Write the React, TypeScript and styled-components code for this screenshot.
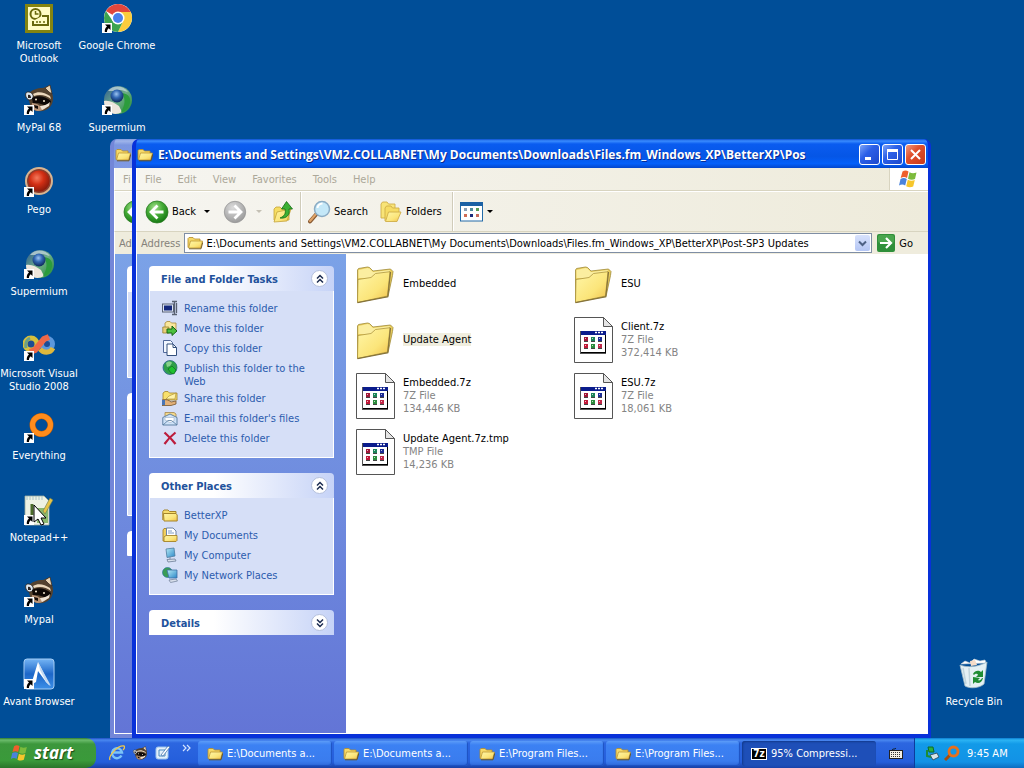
import React from 'react';
import styled, { createGlobalStyle, css } from 'styled-components';

const UI_FONT = '"DejaVu Sans Condensed", "DejaVu Sans", "Noto Sans", sans-serif';
const TITLE_FONT = '"Open Sans", "Noto Sans", sans-serif';

const GlobalStyle = createGlobalStyle`
  *, *::before, *::after { box-sizing: border-box; }
  body {
    margin: 0;
    overflow: hidden;
    font-family: ${UI_FONT};
    font-size: 11px;
    line-height: 13px;
  }
  button, input { font: inherit; color: inherit; }
  button { border: 0; padding: 0; background: none; }
  ul { list-style: none; margin: 0; padding: 0; }
  h1, h2, p { margin: 0; }
  svg { display: block; flex: none; }
`;

/* ---------- drawings ---------- */

const SharedDefs = styled.svg`
  position: absolute;
`;

const Gradients = () => (
  <SharedDefs width="0" height="0" aria-hidden="true">
    <defs>
      <linearGradient id="folderFront" x1="0" y1="0" x2="1" y2="1">
        <stop offset="0" stopColor="#fff6a8" />
        <stop offset="0.6" stopColor="#fbe57a" />
        <stop offset="1" stopColor="#f0bf4a" />
      </linearGradient>
      <radialGradient id="greenBall" cx="0.4" cy="0.3" r="0.7">
        <stop offset="0" stopColor="#a4e08c" />
        <stop offset="0.5" stopColor="#46ac38" />
        <stop offset="1" stopColor="#177a14" />
      </radialGradient>
      <radialGradient id="grayBall" cx="0.4" cy="0.3" r="0.7">
        <stop offset="0" stopColor="#dcdcdc" />
        <stop offset="1" stopColor="#9c9c9c" />
      </radialGradient>
      <radialGradient id="redBall" cx="0.4" cy="0.35" r="0.65">
        <stop offset="0" stopColor="#f47a5c" />
        <stop offset="0.5" stopColor="#d32f14" />
        <stop offset="1" stopColor="#8c1c0c" />
      </radialGradient>
      <radialGradient id="blueBall" cx="0.45" cy="0.35" r="0.65">
        <stop offset="0" stopColor="#9cc4f0" />
        <stop offset="0.45" stopColor="#3268b4" />
        <stop offset="1" stopColor="#0c2658" />
      </radialGradient>
      <linearGradient id="globe" x1="0" y1="0" x2="1" y2="1">
        <stop offset="0" stopColor="#2c5890" />
        <stop offset="0.5" stopColor="#6fae8a" />
        <stop offset="1" stopColor="#1c8a2c" />
      </linearGradient>
      <linearGradient id="screen" x1="0" y1="0" x2="1" y2="1">
        <stop offset="0" stopColor="#b8ecf6" />
        <stop offset="1" stopColor="#2a86c8" />
      </linearGradient>
      <linearGradient id="avant" x1="0" y1="0" x2="0" y2="1">
        <stop offset="0" stopColor="#74b4f4" />
        <stop offset="0.5" stopColor="#1c66c8" />
        <stop offset="1" stopColor="#3c90e8" />
      </linearGradient>
    </defs>
  </SharedDefs>
);

const ShortcutArrow = () => (
  <g>
    <rect x="1" y="21" width="10" height="10" fill="#fff" />
    <path d="M4 22.500h5.500V28L7.700 26.300C6.200 27.500 6 28.500 6 30H3.800c-.2-2.400.6-4.200 2.200-5.500z" fill="#000" />
  </g>
);

const SmallFolder = () => (
  <svg width="16" height="16" viewBox="0 0 16 16">
    <path d="M1 12.500V3.500L2 2.500h4l1.500 1.500H13v3" fill="#f6d968" stroke="#b48c28" strokeWidth=".8" />
    <path d="M1.500 13 3.500 6h12l-1.800 7z" fill="url(#folderFront)" stroke="#b48c28" strokeWidth=".7" />
    <path d="M2 13.800h12l1.800-6.500" fill="none" stroke="#6e5214" strokeWidth=".9" />
  </svg>
);

const BigFolder = () => (
  <svg width="48" height="48" viewBox="0 0 48 48">
    <path d="M6.500 43V11l1-1.500L16.500 8l2 .5 3.500 3.500 17.500-2 2.500 2.500-.5 4-4.500 21z" fill="#e9cd5c" stroke="#a08a38" strokeWidth=".8" />
    <path d="M7.500 19V11l9-2 2 .5 3.500 3.500 17-2-2 4-12 2-6 2.500z" fill="#fbeea0" />
    <path d="M7 20.500 20 18.500l4.500-4L39 12.700 36.500 37 6.500 43.500z" fill="url(#folderFront)" stroke="#a48a34" strokeWidth=".7" />
    <path d="M6.500 43.700 36.800 37.800 39.500 13" fill="none" stroke="#85733c" strokeWidth="1.200" />
  </svg>
);

const Dot = ({ x, y, c }: { x: number; y: number; c: string }) => (
  <g>
    <rect x={x} y={y} width="4" height="4" fill={c} />
    <rect x={x + 1} y={y + 1} width="1" height="1" fill="#fff" opacity=".7" />
    <rect x={x} y={y + 4} width="4" height="1" fill="#444" />
  </g>
);

const BigDocument = () => (
  <svg width="48" height="48" viewBox="0 0 48 48">
    <path d="M5.500 2.500h29l9 9v36h-38z" fill="#fff" stroke="#555" />
    <path d="M34.500 2.500v9h9z" fill="#e4e4e4" stroke="#555" />
    <rect x="11" y="16" width="26" height="23" fill="#555" />
    <rect x="12" y="16" width="25" height="22" fill="#000" />
    <rect x="12" y="19" width="24" height="18" fill="#fff" />
    <rect x="12" y="16" width="25" height="4" fill="#0a1c8c" />
    <path d="M26 17.500h2m1 0h2m1 0h2" stroke="#fff" strokeWidth="1.500" />
    <Dot x={15} y={22} c="#a01838" />
    <Dot x={22} y={22} c="#1c8458" />
    <Dot x={29} y={22} c="#1c2c94" />
    <Dot x={15} y={29} c="#c01838" />
    <Dot x={22} y={29} c="#2c8c3c" />
    <Dot x={29} y={29} c="#c02848" />
  </svg>
);

const WindowsFlag = ({ size = 22 }: { size?: number }) => (
  <svg width={size} height={size} viewBox="0 0 22 22">
    <path d="M4.500 3.500c2-1.200 4-1.200 6 0L9 10c-2-1.200-4-1.200-6.300 0z" fill="#ee5f2c" />
    <path d="M11.500 4.200c2.200 1.300 4.500 1.300 7 .2L17 11c-2.300 1-4.500 1-7-.3z" fill="#7cbb3c" />
    <path d="M2.500 11c2.200-1.200 4.200-1.200 6.300 0l-1.600 6.500c-2-1.200-4-1.200-6.200 0z" fill="#4a83dc" />
    <path d="M9.800 11.800c2.400 1.300 4.600 1.300 7 .2L15.200 18.500c-2.400 1.100-4.700 1-7-.2z" fill="#f6c62c" />
  </svg>
);

const BackBall = () => (
  <svg width="24" height="24" viewBox="0 0 24 24">
    <circle cx="12" cy="12" r="11" fill="url(#greenBall)" stroke="#2c7c24" strokeWidth=".8" />
    <path d="M12.500 5.500 6 12l6.500 6.500M6.500 12h12" fill="none" stroke="#fff" strokeWidth="2.800" />
  </svg>
);

const ForwardBall = () => (
  <svg width="24" height="24" viewBox="0 0 24 24">
    <circle cx="12" cy="12" r="10.700" fill="url(#grayBall)" stroke="#959595" strokeWidth=".8" />
    <path d="m11.500 5.500 6.500 6.500-6.500 6.500M17.500 12h-12" fill="none" stroke="#fff" strokeWidth="2.800" />
  </svg>
);

const UpIcon = () => (
  <svg width="24" height="24" viewBox="0 0 24 24">
    <path d="M3 20V9l2-2h4l2 2h4l3-1v12z" fill="#f6dd62" stroke="#c4a33a" strokeWidth=".8" />
    <path d="m3 22 3-10 14-3-4 12z" fill="url(#folderFront)" stroke="#c4a33a" strokeWidth=".8" />
    <path d="M9 18c5-2 6-5 5-9h-3.500l5-7.500L21.500 9H18c1.500 6-3 10-9 9z" fill="#3cb034" stroke="#146c14" strokeWidth=".8" />
  </svg>
);

const SearchIcon = () => (
  <svg width="24" height="24" viewBox="0 0 24 24">
    <path d="m3 21.500 6.500-7.500" stroke="#8a5c34" strokeWidth="4" strokeLinecap="round" />
    <path d="m3 21 6-7" stroke="#e0a468" strokeWidth="2" strokeLinecap="round" />
    <circle cx="15" cy="9" r="7.500" fill="#c4e8f8" stroke="#8bacc4" strokeWidth="1.500" />
    <path d="M10.500 8a5 5 0 0 1 5-4.500" fill="none" stroke="#fff" strokeWidth="2" />
  </svg>
);

const FoldersIcon = () => (
  <svg width="24" height="24" viewBox="0 0 24 24">
    <path d="M2 18V4l1.500-2H8l1.500 2H16v14z" fill="#f8e478" stroke="#cfae48" strokeWidth=".9" />
    <path d="M6 21V8l1.500-2H12l1.500 2H20v5" fill="#f6dc64" stroke="#cfae48" strokeWidth=".9" />
    <path d="m6.500 21.500 3-9.500H22l-4 9.500z" fill="url(#folderFront)" stroke="#cfae48" strokeWidth=".9" />
  </svg>
);

const ViewsIcon = () => (
  <svg width="24" height="20" viewBox="0 0 24 20">
    <rect x=".5" y=".5" width="22" height="18.500" fill="#fff" stroke="#236ba8" />
    <rect x="0" y="0" width="23" height="4" fill="#1b61a4" />
    {[4, 10, 16].map((x, i) => (
      <g key={x}>
        <rect x={x} y="6" width="3" height="3" fill={['#8aa0b4', '#4c8c9c', '#5a9c54'][i]} />
        <rect x={x} y="12" width="3" height="3" fill={['#d06c54', '#1a2c7c', '#c86c5c'][i]} />
      </g>
    ))}
  </svg>
);

const GoIcon = () => (
  <svg width="18" height="18" viewBox="0 0 18 18">
    <rect width="18" height="18" rx="2" fill="#2f8f3a" />
    <rect x="1" y="1" width="16" height="8" rx="2" fill="#5cb45c" opacity=".6" />
    <path d="M3 9h10M9 4l5 5-5 5" fill="none" stroke="#fff" strokeWidth="2.200" />
  </svg>
);

const Chevrons = ({ down }: { down?: boolean }) => (
  <svg width="10" height="10" viewBox="0 0 10 10">
    <path
      d={down ? 'm2 1.500 3 3 3-3M2 5.500l3 3 3-3' : 'm2 4.500 3-3 3 3M2 8.500l3-3 3 3'}
      fill="none"
      stroke="#1c2c50"
      strokeWidth="1.500"
    />
  </svg>
);

/* sixteen-pixel drawings of the task pane */
const paneArt = {
  rename: (
    <>
      <rect x=".5" y="4" width="11" height="8" fill="#dfe6f4" stroke="#5b6478" />
      <rect x="2" y="5.500" width="8" height="5" fill="#14287c" />
      <path d="M10 1.500h5M12.500 1.500v13M10 14.500h5M14.500 3v10" stroke="#5a6272" strokeWidth="1.300" />
    </>
  ),
  move: (
    <>
      <path d="M3 9V3l2-1.500h3L9.500 3H14v8z" fill="#f9e79c" stroke="#a98c38" strokeWidth=".8" />
      <path d="M.8 13V7h6v6z" fill="#e9d07a" stroke="#99802c" strokeWidth=".8" />
      <path d="M5 9h5V6l5 5-5 4.500V13H5z" fill="#4cc03c" stroke="#176414" />
    </>
  ),
  copy: (
    <>
      <path d="M1.500.500h7l2 2v10h-9z" fill="#f2f7ff" stroke="#51699a" />
      <path d="M5 4h6l3.500 3.500v8H5z" fill="#fff" stroke="#34507c" />
      <path d="M11 4v3.500h3.500" fill="none" stroke="#34507c" />
    </>
  ),
  publish: (
    <>
      <circle cx="8" cy="7.500" r="7" fill="#3f86b4" stroke="#1c5c68" strokeWidth=".7" />
      <path d="M2 5c3-5 9-5 12-1 2 4 0 8-4 10C4 15 1 10 2 5z" fill="#2f9f48" />
      <path d="M4 3c2-2 5-2 6 0L8 6 5 7z" fill="#87d08c" />
      <path d="m6 9 4-3 4 4-2 4-3-1z" fill="#1fc030" stroke="#0b6018" strokeWidth=".6" />
    </>
  ),
  share: (
    <>
      <path d="M1 10V3l2-1.500h3L7.500 3H15v7z" fill="#f8e06c" stroke="#a3842c" strokeWidth=".8" />
      <path d="M4 9 7 6l7-3-1 6z" fill="#fff3a8" stroke="#a3842c" strokeWidth=".6" />
      <path d="M0 10c4-1 7 0 9 2l5-1v3l-5 1.500H0z" fill="#e2b078" stroke="#74542c" strokeWidth=".8" />
      <path d="M0 10h3v5H0z" fill="#4874b4" />
    </>
  ),
  mail: (
    <>
      <path d="M3 6V2.500h9l2 1.500v5" fill="#f4d98c" stroke="#a4864c" strokeWidth=".8" />
      <path d="M.800 7.500 8 4l7 3.500V15H.8z" fill="#cfe2f8" stroke="#54789c" strokeWidth=".9" />
      <path d="M3 7.500h9V11L8 12.500 3 10z" fill="#fff" stroke="#8aa0bc" strokeWidth=".5" />
      <path d="m1 15 5-4.500h3.500L15 15" fill="none" stroke="#54789c" strokeWidth=".8" />
    </>
  ),
  remove: <path d="M2.500 2.500c3 3 7 6 11 11.500M13.500 2.500C9 6 6 9 2.500 14" fill="none" stroke="#bc1c3c" strokeWidth="2.200" />,
  folder: (
    <>
      <path d="M.8 13V4.500L2 3h4l1.500 1.500H14v2" fill="#f6dc6c" stroke="#a5842a" />
      <path d="M1.500 6.500H14l1.200 1.500v6H2z" fill="url(#folderFront)" stroke="#a5842a" />
    </>
  ),
  documents: (
    <>
      <path d="M1 14V3l1-1.500h3V10h9v4z" fill="#f0cf60" stroke="#a5842a" strokeWidth=".9" />
      <path d="M4.500 1h6.500l3 3v7H4.500z" fill="#fff" stroke="#6c83a4" />
      <path d="M6 4h4M6 6h6" stroke="#7f9cc4" />
      <path d="M2 14.500V10l2-1.500h11v5l-1 1z" fill="url(#folderFront)" stroke="#a5842a" strokeWidth=".9" />
    </>
  ),
  computer: (
    <>
      <path d="m4 2 8-1 1 8-8 1.500z" fill="url(#screen)" stroke="#4c7ca0" strokeWidth=".8" />
      <path d="M8 10v2M5 12.500l8-.5 1 2-8 1z" fill="#d9e0ec" stroke="#7888a0" strokeWidth=".9" />
    </>
  ),
  network: (
    <>
      <circle cx="5.500" cy="5.500" r="5" fill="#3a9c54" stroke="#226c9c" strokeWidth=".6" />
      <path d="M5 3h10v8H7z" fill="url(#screen)" stroke="#3c6ca4" strokeWidth=".8" />
      <path d="m7 13 7-1 1.500 2-7 1.500z" fill="#d9e0ec" stroke="#7888a0" strokeWidth=".8" />
    </>
  ),
};

type PaneArt = keyof typeof paneArt;

const PaneIcon = ({ name }: { name: PaneArt }) => (
  <svg width="16" height="16" viewBox="0 0 16 16">
    {paneArt[name]}
  </svg>
);

const Raccoon = () => (
  <g>
    <path d="M6 9c3-3 8-5 14-5l7-3 2 8c2 5 1 11-2 14-4 4-9 5-13 4-5-1-9-6-8-18z" fill="#54422f" />
    <path d="m22 4 5-3 2 9-3-2z" fill="#ead4b4" stroke="#2c2018" strokeWidth=".7" />
    <path d="M3 9c1-2 6-1 7 2s-1 5-4 5c-3-1-4-5-3-7z" fill="#dfe8f0" stroke="#2c241c" strokeWidth=".9" />
    <path d="M5 11c2-1 3 1 3 3L5 14z" fill="#2c2420" />
    <path d="M10 10c5-3 11-2 17 2l1 3c-5-4-11-5-17-3z" fill="#ecd8bc" />
    <path d="M9 14c6-3 13-2 19 3-1 4-4 5-7 4l-6-2-5 1z" fill="#0e0806" />
    <path d="M9 19c3 0 6 1 8 3l8-1c-2 4-6 6-11 6-4-1-6-4-5-8z" fill="#b89478" />
    <path d="M17 22c4 0 8-2 10-4l-1 4-7 4z" fill="#f0e4d4" />
    <path d="m11 21 4 1v3l-3-1z" fill="#140c08" />
    <circle cx="13" cy="15.500" r="1" fill="#f6e8d0" />
    <circle cx="21" cy="17" r="1" fill="#f6e8d0" />
  </g>
);

const GlobeArt = () => (
  <g>
    <circle cx="17" cy="16" r="14" fill="url(#globe)" />
    <path d="M7 7c5-6 15-6 20 1l-7-2-7 1z" fill="#c4d8dc" opacity=".75" />
    <path d="M3 17c6-1 10 2 15 5l3 6c-8 5-18 0-18-11z" fill="#eee6dc" />
    <path d="M21 9c7 1 9 5 8 10-2 6-5 9-9 9 4-7 5-12 1-19z" fill="#2c9c3c" />
    <circle cx="16" cy="12" r="6.500" fill="url(#blueBall)" />
  </g>
);

const desktopArt = {
  outlook: (
    <>
      <rect x="2" y="2" width="28" height="29" fill="#848410" />
      <rect x="5" y="5" width="22" height="23" fill="#fffcc4" />
      <circle cx="12.500" cy="12" r="5" fill="#fffcc4" stroke="#68680c" strokeWidth="2" />
      <path d="M12.500 9v3h3" fill="none" stroke="#68680c" strokeWidth="1.500" />
      <path d="M19 14h6v9H10v-4" fill="#fffcc4" stroke="#68680c" strokeWidth="2" />
      <path d="M13 20h2m1 0h2m2 0h2" stroke="#68680c" strokeWidth="1.500" />
    </>
  ),
  raccoon: (
    <>
      <Raccoon />
      <ShortcutArrow />
    </>
  ),
  pego: (
    <>
      <circle cx="16" cy="15" r="14" fill="#d8b490" />
      <circle cx="16" cy="15" r="12" fill="#8c3c2c" />
      <circle cx="16" cy="15" r="10.500" fill="url(#redBall)" />
      <ShortcutArrow />
    </>
  ),
  globe: (
    <>
      <GlobeArt />
      <ShortcutArrow />
    </>
  ),
  visual: (
    <>
      <circle cx="8" cy="14" r="6" fill="#1c4c94" stroke="#d8c03c" strokeWidth="5" />
      <circle cx="24" cy="14" r="5.500" fill="#1c4c94" stroke="#5c98dc" strokeWidth="5" />
      <path d="M17 19c3 4 10 5 13-1" fill="none" stroke="#e0b83c" strokeWidth="5" />
      <path d="M3 18c-1-5 0-8 4-10" fill="none" stroke="#6ca088" strokeWidth="3" />
      <path d="m7 22 5-2 9-11 5-2" fill="none" stroke="#ee6848" strokeWidth="6" />
      <ShortcutArrow />
    </>
  ),
  everything: (
    <>
      <circle cx="18.500" cy="13" r="9" fill="none" stroke="#b85c0c" strokeWidth="6" />
      <circle cx="18.500" cy="13" r="9" fill="none" stroke="#ff8c1c" strokeWidth="5" />
      <ShortcutArrow />
    </>
  ),
  notepad: (
    <>
      <path d="M2 2h19l5 5v24H2z" fill="#eef2e4" stroke="#9caca0" strokeWidth=".8" />
      <path d="M3 3h18M3 5h18" stroke="#a8c4c8" strokeDasharray="2 1" />
      <path d="M14 14h11v15H14z" fill="#8cb870" />
      <path d="m20 17 7-13 3 2-8 14z" fill="#e8c448" stroke="#6c7c4c" strokeWidth=".6" />
      <path d="M9 10v13" stroke="#4c6c2c" strokeWidth="3" />
      <ShortcutArrow />
      <path d="M11 11v17l4-3 3 6 3-1-3-6h5z" fill="#fff" stroke="#000" />
    </>
  ),
  avant: (
    <>
      <rect x="1" y="1" width="30" height="30" rx="3" fill="url(#avant)" stroke="#a4ccf4" />
      <path d="M15 4 8 27l5-3 2-11 8 11 4 4z" fill="#fff" />
      <path d="m15 4 13 24-5-4-6-12z" fill="#c4daf2" />
      <ShortcutArrow />
    </>
  ),
  chrome: (
    <>
      <circle cx="17" cy="16" r="14" fill="#fff" />
      <path d="M17 16 4.900 9A14 14 0 0 1 29.100 9L30 10H17z" fill="#e0463c" />
      <path d="M17 10h12.700A14 14 0 0 1 17 30l5.200-11z" fill="#fbcc3c" />
      <path d="M4.900 9A14 14 0 0 0 17 30l5.200-11L11.800 19z" fill="#3ca450" />
      <circle cx="17" cy="16" r="6.500" fill="#fff" />
      <circle cx="17" cy="16" r="5" fill="#4a80ec" />
      <ShortcutArrow />
    </>
  ),
  bin: (
    <>
      <path d="m3 6 4-3 5 2 4-4 6 2 5-1 1 3z" fill="#fff" stroke="#c8d4dc" strokeWidth=".6" />
      <path d="m12 3 5-1 2 5-6 1z" fill="#f6dcc8" />
      <path d="M2 7c8 3 18 2 27-3l-3 22c-4 4-14 5-19 2z" fill="#e4f0f4" stroke="#a4bcc8" strokeWidth=".8" />
      <path d="m5 10 3 16M11 10l1 18" stroke="#c0d4dc" strokeWidth="1.500" />
      <path d="M15 16c2-4 6-4 8-2l2-2v7h-7l2-2c-1-2-3-1-4 0zM25 20c-1 5-5 6-8 4l-2 2v-7l7 1-2 2c1 1 3 0 4-2z" fill="#208c34" />
    </>
  ),
};

type DesktopArt = keyof typeof desktopArt;

/* ---------- desktop ---------- */

const Screen = styled.div`
  display: flex;
  flex-direction: column;
  height: 100vh;
  background: #004e98;
`;

const Workspace = styled.main`
  position: relative;
  flex: 1;
  min-height: 0;
  display: flex;
  justify-content: space-between;
`;

const IconColumns = styled.div`
  display: flex;
`;

const IconColumn = styled.ul<{ $bottom?: boolean }>`
  width: 78px;
  ${(p) =>
    p.$bottom &&
    css`
      align-self: flex-end;
      margin-right: 11px;
    `}
`;

const Shortcut = styled.button`
  display: flex;
  flex-direction: column;
  align-items: center;
  gap: 5px;
  width: 100%;
  height: 82px;
  padding-top: 2px;
  color: #fff;
  text-align: center;
`;

const DesktopIcon = ({ art, label }: { art: DesktopArt; label: string }) => (
  <li>
    <Shortcut type="button">
      <svg width="32" height="32" viewBox="0 0 32 32">
        {desktopArt[art]}
      </svg>
      <span>{label}</span>
    </Shortcut>
  </li>
);

/* ---------- explorer window ---------- */

const Frame = styled.section<{ $active?: boolean }>`
  position: absolute;
  top: 139px;
  bottom: 0;
  left: ${(p) => (p.$active ? '132px' : '110px')};
  right: ${(p) => (p.$active ? '93px' : '115px')};
  display: flex;
  flex-direction: column;
  border: solid ${(p) => (p.$active ? '#0831d9' : '#7386d8')};
  border-width: 0 3px 4px 4px;
  border-radius: 7px 7px 0 0;
  background: ${(p) => (p.$active ? '#0831d9' : '#7386d8')};
  overflow: hidden;
`;

const TitleBar = styled.header<{ $active?: boolean }>`
  display: flex;
  align-items: center;
  gap: 5px;
  height: 29px;
  padding: 2px 2px 0 1px;
  background: ${(p) =>
    p.$active
      ? 'linear-gradient(#0a4fd0 0, #3a8cff 2px, #0a5cf0 5px, #0556e6 60%, #0460fa 85%, #0346cc 100%)'
      : 'linear-gradient(#7a96df 0, #a0b5ea 2px, #7b96e0 6px, #8099e4 100%)'};
`;

const Title = styled.h1`
  flex: 1;
  overflow: hidden;
  white-space: nowrap;
  font: bold 12px/18px ${TITLE_FONT};
  color: #fff;
  text-shadow: 1px 1px #0a2a8c;
`;

const CaptionButtons = styled.div`
  display: flex;
  gap: 2px;
`;

const CaptionButton = styled.button<{ $close?: boolean }>`
  display: grid;
  place-items: center;
  width: 21px;
  height: 21px;
  border: 1px solid #fff;
  border-radius: 3px;
  background: ${(p) =>
    p.$close
      ? 'linear-gradient(135deg, #f09a80, #e0502c 40%, #c8391a)'
      : 'linear-gradient(135deg, #7ca4f8, #2c60e8 40%, #1c48cc)'};
`;

const Bar = styled.div<{ $height: number }>`
  display: flex;
  align-items: center;
  height: ${(p) => p.$height}px;
  border-left: 1px solid #fff;
  border-bottom: 1px solid #d8d4c0;
  background: linear-gradient(90deg, #f6f5f0, #eeebdb);
  white-space: nowrap;
`;

const MenuItem = styled.button`
  padding: 0 8px;
  color: #aca899;
`;

const Throbber = styled.div`
  display: grid;
  place-items: center;
  align-self: stretch;
  width: 39px;
  margin-left: auto;
  border-left: 1px solid #d8d4c0;
  background: #fff;
`;

const Toolbar = styled(Bar)`
  padding-left: 8px;
  border-top: 1px solid #fff;
`;

const ToolButton = styled.button<{ $before?: number }>`
  display: flex;
  align-items: center;
  gap: 3px;
  margin-left: ${(p) => p.$before ?? 0}px;
`;

const Arrow = styled.span<{ $faint?: boolean; $gap?: number }>`
  width: 0;
  height: 0;
  margin-left: ${(p) => p.$gap ?? 0}px;
  border: 3px solid transparent;
  border-bottom: 0;
  border-top-color: ${(p) => (p.$faint ? '#c4c0b4' : '#000')};
`;

const Divider = styled.span<{ $before: number }>`
  width: 2px;
  align-self: stretch;
  margin-left: ${(p) => p.$before}px;
  border-left: 1px solid #d0ccba;
  border-right: 1px solid #fff;
`;

const AddressBar = styled(Bar)`
  padding-left: 4px;
  border-bottom: 0;
  background: #efecdd;
`;

const AddressLabel = styled.label`
  color: #85827a;
`;

const AddressBox = styled.div`
  flex: 1;
  display: flex;
  align-items: center;
  gap: 3px;
  height: 20px;
  min-width: 0;
  margin: 0 5px 0 4px;
  padding: 0 1px 0 2px;
  border: 1px solid #7f8ea4;
  background: #fff;
`;

const AddressInput = styled.input`
  flex: 1;
  min-width: 0;
  border: 0;
  padding: 0;
  outline: 0;
  background: none;
  color: #000;
`;

const DropButton = styled.button`
  display: grid;
  place-items: center;
  width: 15px;
  height: 16px;
  border-radius: 2px;
  background: linear-gradient(#d8e2fc, #b4c6f4);
`;

const GoButton = styled.button`
  display: flex;
  align-items: center;
  gap: 4px;
  padding-right: 15px;
`;

const Body = styled.div`
  flex: 1;
  display: flex;
  min-height: 0;
  border-left: 1px solid #fff;
  border-bottom: 1px solid #fff;
`;

const TaskPane = styled.aside`
  display: flex;
  flex-direction: column;
  gap: 15px;
  width: 209px;
  padding: 12px;
  background: linear-gradient(#7ba2e7, #6375d6);
`;

const Panel = styled.section`
  display: flex;
  flex-direction: column;
`;

const PanelHeader = styled.header`
  display: flex;
  align-items: center;
  justify-content: space-between;
  height: 25px;
  padding: 0 6px 0 12px;
  border-radius: 4px 4px 0 0;
  background: linear-gradient(90deg, #fff 35%, #c6d3f7);
`;

const PanelTitle = styled.h2`
  padding-top: 2px;
  font: bold 11px/13px ${UI_FONT};
  color: #22529c;
`;

const RoundButton = styled.button`
  display: grid;
  place-items: center;
  width: 17px;
  height: 17px;
  border: 1px solid #b4c0dc;
  border-radius: 50%;
  background: #fff;
`;

const PanelList = styled.ul`
  display: flex;
  flex-direction: column;
  gap: 4px;
  padding: 9px 12px 11px;
  border: 1px solid #fff;
  border-top: 0;
  background: #d6dff7;
`;

const PanelLink = styled.a`
  display: flex;
  align-items: flex-start;
  gap: 6px;
  color: #2c5cae;
  text-decoration: none;
`;

const PanelText = styled.span`
  padding-top: 2px;
  margin-bottom: -2px;
`;

const EmptyPanel = styled.div<{ $height: number }>`
  height: ${(p) => p.$height}px;
  border-radius: 4px 4px 0 0;
  border: 1px solid #fff;
  background: linear-gradient(#fff 25px, #d6dff7 25px);
`;

const FileArea = styled.div`
  flex: 1;
  background: #fff;
`;

const FileGrid = styled.ul`
  display: grid;
  grid-template-columns: repeat(auto-fill, 218px);
  grid-auto-rows: 56px;
  max-width: 545px;
  padding: 1px 0 0 5px;
`;

const FileItem = styled.li`
  display: flex;
  align-items: center;
  gap: 4px;
`;

const FileName = styled.p<{ $highlight?: boolean }>`
  width: max-content;
  color: #000;
  background: ${(p) => (p.$highlight ? '#f0eedf' : 'none')};
`;

const FileMeta = styled.p`
  color: #848484;
`;

type PaneItem = { art: PaneArt; label: string };

const fileTasks: PaneItem[] = [
  { art: 'rename', label: 'Rename this folder' },
  { art: 'move', label: 'Move this folder' },
  { art: 'copy', label: 'Copy this folder' },
  { art: 'publish', label: 'Publish this folder to the Web' },
  { art: 'share', label: 'Share this folder' },
  { art: 'mail', label: "E-mail this folder's files" },
  { art: 'remove', label: 'Delete this folder' },
];

const places: PaneItem[] = [
  { art: 'folder', label: 'BetterXP' },
  { art: 'documents', label: 'My Documents' },
  { art: 'computer', label: 'My Computer' },
  { art: 'network', label: 'My Network Places' },
];

type Entry = { name: string; kind?: string; size?: string; highlight?: boolean };

const entries: Entry[] = [
  { name: 'Embedded' },
  { name: 'ESU' },
  { name: 'Update Agent', highlight: true },
  { name: 'Client.7z', kind: '7Z File', size: '372,414 KB' },
  { name: 'Embedded.7z', kind: '7Z File', size: '134,446 KB' },
  { name: 'ESU.7z', kind: '7Z File', size: '18,061 KB' },
  { name: 'Update Agent.7z.tmp', kind: 'TMP File', size: '14,236 KB' },
];

const FOLDER_PATH =
  'E:\\Documents and Settings\\VM2.COLLABNET\\My Documents\\Downloads\\Files.fm_Windows_XP\\BetterXP\\Post-SP3 Updates';
const WINDOW_TITLE =
  'E:\\Documents and Settings\\VM2.COLLABNET\\My Documents\\Downloads\\Files.fm_Windows_XP\\BetterXP\\Pos';

const SidePanel = ({ title, items }: { title: string; items?: PaneItem[] }) => (
  <Panel>
    <PanelHeader>
      <PanelTitle>{title}</PanelTitle>
      <RoundButton type="button" aria-label={`Toggle ${title}`}>
        <Chevrons down={!items} />
      </RoundButton>
    </PanelHeader>
    {items && (
      <PanelList>
        {items.map((item) => (
          <li key={item.label}>
            <PanelLink href="#">
              <PaneIcon name={item.art} />
              <PanelText>{item.label}</PanelText>
            </PanelLink>
          </li>
        ))}
      </PanelList>
    )}
  </Panel>
);

/* only a strip of this window shows at the left of the active one */
const BackgroundWindow = () => (
  <Frame aria-hidden="true">
    <TitleBar>
      <SmallFolder />
    </TitleBar>
    <Bar $height={23}>
      <MenuItem type="button" tabIndex={-1}>Fi</MenuItem>
    </Bar>
    <Toolbar $height={41}>
      <BackBall />
    </Toolbar>
    <AddressBar $height={22}>
      <AddressLabel as="span">Ad</AddressLabel>
    </AddressBar>
    <Body>
      <TaskPane>
        <EmptyPanel $height={112} />
        <EmptyPanel $height={123} />
        <EmptyPanel $height={25} />
      </TaskPane>
    </Body>
  </Frame>
);

const ExplorerWindow = () => (
  <Frame $active>
    <TitleBar $active>
      <SmallFolder />
      <Title>{WINDOW_TITLE}</Title>
      <CaptionButtons>
        <CaptionButton type="button" aria-label="Minimize">
          <svg width="15" height="15" viewBox="0 0 15 15">
            <path d="M3 11.500h6" stroke="#fff" strokeWidth="3" />
          </svg>
        </CaptionButton>
        <CaptionButton type="button" aria-label="Maximize">
          <svg width="15" height="15" viewBox="0 0 15 15">
            <path d="M2.500 3v9.500h10V3" fill="none" stroke="#fff" />
            <path d="M2 3.500h11" stroke="#fff" strokeWidth="3" />
          </svg>
        </CaptionButton>
        <CaptionButton type="button" aria-label="Close" $close>
          <svg width="15" height="15" viewBox="0 0 15 15">
            <path d="m3 3 9 9M12 3l-9 9" stroke="#fff" strokeWidth="2" />
          </svg>
        </CaptionButton>
      </CaptionButtons>
    </TitleBar>
    <Bar $height={23}>
      {['File', 'Edit', 'View', 'Favorites', 'Tools', 'Help'].map((name) => (
        <MenuItem key={name} type="button">{name}</MenuItem>
      ))}
      <Throbber>
        <WindowsFlag />
      </Throbber>
    </Bar>
    <Toolbar $height={41}>
      <ToolButton type="button">
        <BackBall />
        Back
        <Arrow $gap={5} />
      </ToolButton>
      <ToolButton type="button" $before={13} aria-label="Forward">
        <ForwardBall />
        <Arrow $faint $gap={6} />
      </ToolButton>
      <ToolButton type="button" $before={9} aria-label="Up">
        <UpIcon />
      </ToolButton>
      <Divider $before={5} />
      <ToolButton type="button" $before={5}>
        <SearchIcon />
        Search
      </ToolButton>
      <ToolButton type="button" $before={11}>
        <FoldersIcon />
        Folders
      </ToolButton>
      <Divider $before={10} />
      <ToolButton type="button" $before={6} aria-label="Views">
        <ViewsIcon />
        <Arrow />
      </ToolButton>
    </Toolbar>
    <AddressBar $height={22}>
      <AddressLabel htmlFor="address">Address</AddressLabel>
      <AddressBox>
        <SmallFolder />
        <AddressInput id="address" type="text" defaultValue={FOLDER_PATH} />
        <DropButton type="button" aria-label="Show addresses">
          <svg width="9" height="7" viewBox="0 0 9 7">
            <path d="m1 1.500 3.500 3.500L8 1.500" fill="none" stroke="#4d6185" strokeWidth="2" />
          </svg>
        </DropButton>
      </AddressBox>
      <GoButton type="button">
        <GoIcon />
        Go
      </GoButton>
    </AddressBar>
    <Body>
      <TaskPane>
        <SidePanel title="File and Folder Tasks" items={fileTasks} />
        <SidePanel title="Other Places" items={places} />
        <SidePanel title="Details" />
      </TaskPane>
      <FileArea>
        <FileGrid>
          {entries.map((entry) => (
            <FileItem key={entry.name}>
              {entry.kind ? <BigDocument /> : <BigFolder />}
              <div>
                <FileName $highlight={entry.highlight}>{entry.name}</FileName>
                {entry.kind && <FileMeta>{entry.kind}</FileMeta>}
                {entry.size && <FileMeta>{entry.size}</FileMeta>}
              </div>
            </FileItem>
          ))}
        </FileGrid>
      </FileArea>
    </Body>
  </Frame>
);

/* ---------- taskbar ---------- */

const Taskbar = styled.footer`
  display: flex;
  align-items: stretch;
  height: 30px;
  background: linear-gradient(#1f4fc4 0, #4a88f0 2px, #2c66e0 5px, #245edb 80%, #1941a5 100%);
  color: #fff;
`;

const StartButton = styled.button`
  display: flex;
  align-items: center;
  gap: 4px;
  width: 96px;
  padding: 0 0 1px 10px;
  border-radius: 0 10px 10px 0;
  background: linear-gradient(#2f7c2f 0, #6cbc6c 2px, #3c973c 6px, #3a9a3a 75%, #2a752a 100%);
  font: italic bold 17px/20px ${TITLE_FONT};
  color: #fff;
  text-shadow: 1px 1px 1px #184818;
`;

const QuickLaunch = styled.div`
  display: flex;
  align-items: center;
  gap: 7px;
  width: 102px;
  padding-left: 13px;
`;

const QuickButton = styled.button`
  display: block;
`;

const TaskList = styled.div`
  display: flex;
  flex: 1;
  gap: 2px;
  min-width: 0;
  padding-top: 3px;
`;

const TaskButton = styled.button<{ $pressed?: boolean }>`
  display: flex;
  align-items: center;
  gap: 4px;
  flex: 0 1 134px;
  min-width: 0;
  height: 25px;
  padding: 0 8px 0 9px;
  border-radius: 3px;
  background: ${(p) =>
    p.$pressed ? '#1e4fb8' : 'linear-gradient(#5c9cf8 0, #3c81f3 4px, #3a7cee 80%, #2f68d8 100%)'};
  box-shadow: ${(p) => (p.$pressed ? 'inset 1px 1px 2px #123a8c' : 'inset -1px -1px 1px #1c50c0')};
  white-space: nowrap;

  span { overflow: hidden; }
`;

const Language = styled.div`
  display: grid;
  place-items: center;
  width: 37px;
`;

const Tray = styled.div`
  display: flex;
  align-items: center;
  gap: 3px;
  width: 110px;
  padding-left: 10px;
  border-left: 1px solid #0c3c9c;
  background: linear-gradient(#0c7cd0 0, #2cb4f4 2px, #129ae8 6px, #1292e6 80%, #0c6cc0 100%);
`;

const Clock = styled.time`
  margin-left: 4px;
`;

const tasks = [
  { id: 1, label: 'E:\\Documents a...' },
  { id: 2, label: 'E:\\Documents a...' },
  { id: 3, label: 'E:\\Program Files...' },
  { id: 4, label: 'E:\\Program Files...' },
];

const SevenZip = styled.b`
  width: 16px;
  height: 12px;
  border: 1px solid #fff;
  background: #000;
  font: bold 10px/10px ${UI_FONT};
  text-align: center;
`;

export default function App() {
  return (
    <Screen>
      <GlobalStyle />
      <Gradients />
      <Workspace>
        <IconColumns>
          <IconColumn>
            <DesktopIcon art="outlook" label="Microsoft Outlook" />
            <DesktopIcon art="raccoon" label="MyPal 68" />
            <DesktopIcon art="pego" label="Pego" />
            <DesktopIcon art="globe" label="Supermium" />
            <DesktopIcon art="visual" label="Microsoft Visual Studio 2008" />
            <DesktopIcon art="everything" label="Everything" />
            <DesktopIcon art="notepad" label="Notepad++" />
            <DesktopIcon art="raccoon" label="Mypal" />
            <DesktopIcon art="avant" label="Avant Browser" />
          </IconColumn>
          <IconColumn>
            <DesktopIcon art="chrome" label="Google Chrome" />
            <DesktopIcon art="globe" label="Supermium" />
          </IconColumn>
        </IconColumns>
        <IconColumn $bottom>
          <DesktopIcon art="bin" label="Recycle Bin" />
        </IconColumn>
        <BackgroundWindow />
        <ExplorerWindow />
      </Workspace>
      <Taskbar>
        <StartButton type="button">
          <WindowsFlag size={20} />
          start
        </StartButton>
        <QuickLaunch>
          <QuickButton type="button" aria-label="Internet Explorer">
            <svg width="16" height="16" viewBox="0 0 16 16">
              <path d="M12.500 10.500A5 5 0 1 1 13 7.500H4" fill="none" stroke="#7cc4f8" strokeWidth="2.400" />
              <path d="M1 15C-1 11 9 0 15 1c1 1 0 3-1 4" fill="none" stroke="#f0c848" strokeWidth="1.300" />
            </svg>
          </QuickButton>
          <QuickButton type="button" aria-label="Mypal">
            <svg width="16" height="16" viewBox="0 0 32 28">
              <Raccoon />
            </svg>
          </QuickButton>
          <QuickButton type="button" aria-label="Show desktop">
            <svg width="16" height="16" viewBox="0 0 16 16">
              <rect x="1" y="2" width="12" height="12" rx="2" fill="#e4f0fa" stroke="#9cc4ec" />
              <path d="M4 5h6v6H4z" fill="none" stroke="#4c8cc0" />
              <path d="m6 10 7-9 2 1-7 9z" fill="#fff" stroke="#386ca8" strokeWidth=".7" />
            </svg>
          </QuickButton>
          <QuickButton type="button" aria-label="More icons">
            <svg width="16" height="22" viewBox="0 0 16 22">
              <path d="m5 3 3 3-3 3M9 3l3 3-3 3" fill="none" stroke="#d4e4ff" strokeWidth="1.200" />
            </svg>
          </QuickButton>
        </QuickLaunch>
        <TaskList>
          {tasks.map((task) => (
            <TaskButton key={task.id} type="button">
              <SmallFolder />
              <span>{task.label}</span>
            </TaskButton>
          ))}
          <TaskButton type="button" $pressed>
            <SevenZip>7z</SevenZip>
            <span>95% Compressi...</span>
          </TaskButton>
        </TaskList>
        <Language>
          <svg width="14" height="12" viewBox="0 0 14 12">
            <path d="M3 3c1-2 3 0 4-2" fill="none" stroke="#123" />
            <rect x=".5" y="3.500" width="13" height="8" fill="#f4f0e4" stroke="#222" />
            <path d="M2 5.500h10M2 7.500h10M2 9.500h10" stroke="#333" strokeDasharray="1 1" />
          </svg>
        </Language>
        <Tray>
          <svg width="16" height="16" viewBox="0 0 16 16">
            <path d="M3 2h5l1 5H4z" fill="#2cb03c" stroke="#0c6c2c" />
            <path d="m5 10 7-2 2 4-6 3z" fill="#dce4e8" stroke="#34586c" />
            <path d="M2 5v6l4 1" fill="none" stroke="#1c8c34" strokeWidth="2" />
          </svg>
          <svg width="16" height="16" viewBox="0 0 16 16">
            <path d="m6 10-5 5" stroke="#a84c0c" strokeWidth="3" />
            <circle cx="9.500" cy="6.500" r="4.500" fill="none" stroke="#e8701c" strokeWidth="2.800" />
          </svg>
          <Clock>9:45 AM</Clock>
        </Tray>
      </Taskbar>
    </Screen>
  );
}
